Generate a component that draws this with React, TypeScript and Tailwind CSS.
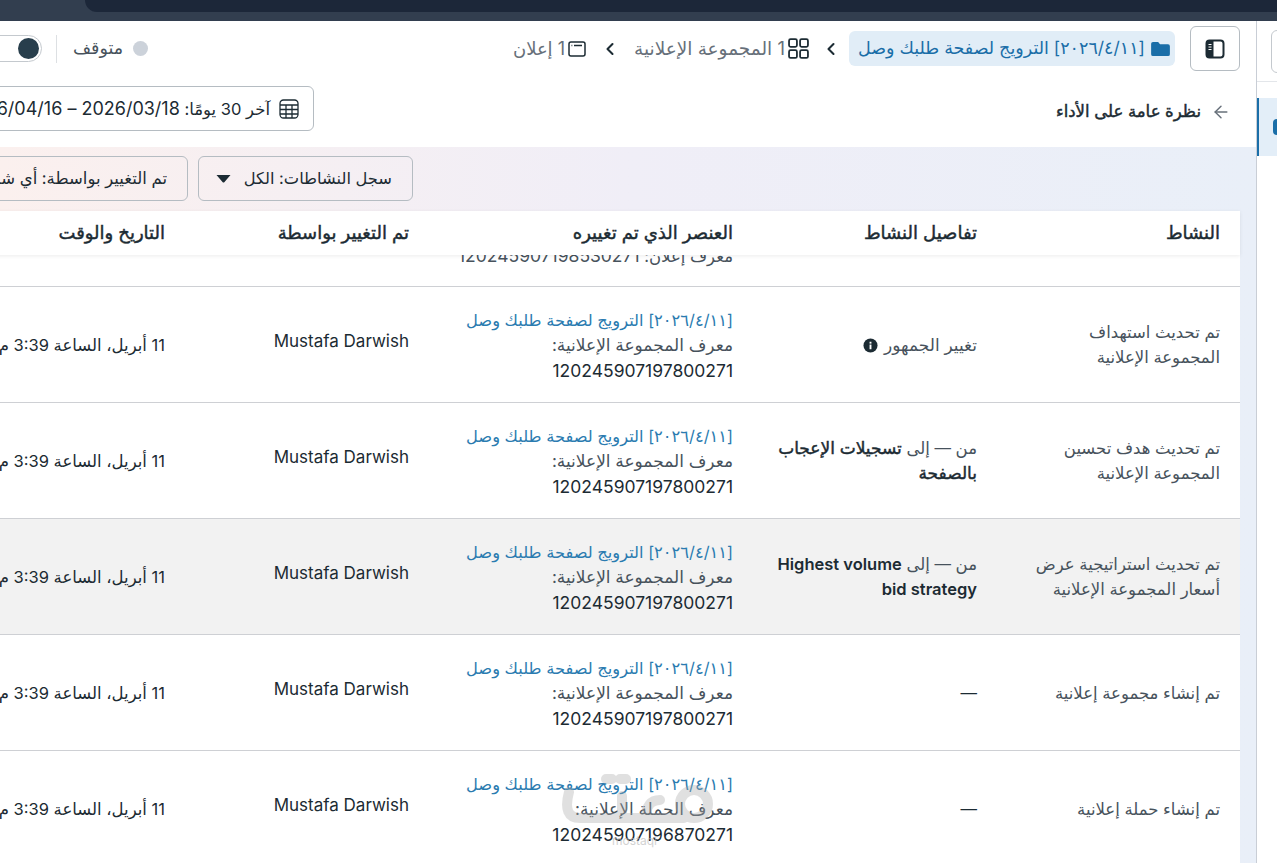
import React from 'react';
import { ArrowLeft, ChevronLeft } from 'lucide-react';

const FONT = "font-['Inter','DejaVu_Sans',sans-serif]";
const HEAVY = 'font-normal [-webkit-text-stroke:0.45px_#1c2b33]';

interface Row {
  activity: string[];
  details: React.ReactNode;
  detailsLift?: boolean;
  idLabel: string;
  id: string;
  hover?: boolean;
}

const CAMPAIGN = '[٢٠٢٦/٤/١١] الترويج لصفحة طلبك وصل';

const rows: Row[] = [
  {
    activity: ['تم تحديث استهداف', 'المجموعة الإعلانية'],
    details: (
      <span className="flex items-center justify-start gap-[6px] text-[17px] text-[#47525c]">
        تغيير الجمهور
        <svg viewBox="0 0 16 16" className="h-[15px] w-[15px] fill-[#1c2b33]">
          <circle cx="8" cy="8" r="7.5" />
          <rect x="7" y="7" width="2" height="5" fill="#fff" />
          <rect x="7" y="4" width="2" height="2" fill="#fff" />
        </svg>
      </span>
    ),
    idLabel: 'معرف المجموعة الإعلانية:',
    id: '120245907197800271',
  },
  {
    activity: ['تم تحديث هدف تحسين', 'المجموعة الإعلانية'],
    details: (
      <>
        <span className="text-[#47525c]">من — إلى </span>
        <b className={`text-[17px] ${HEAVY}`}>تسجيلات الإعجاب بالصفحة</b>
      </>
    ),
    detailsLift: true,
    idLabel: 'معرف المجموعة الإعلانية:',
    id: '120245907197800271',
  },
  {
    activity: ['تم تحديث استراتيجية عرض', 'أسعار المجموعة الإعلانية'],
    details: (
      <>
        <span className="text-[#47525c]">من — إلى </span>
        <b className="font-semibold">Highest volume bid strategy</b>
      </>
    ),
    detailsLift: true,
    idLabel: 'معرف المجموعة الإعلانية:',
    id: '120245907197800271',
    hover: true,
  },
  {
    activity: ['تم إنشاء مجموعة إعلانية'],
    details: '—',
    idLabel: 'معرف المجموعة الإعلانية:',
    id: '120245907197800271',
  },
  {
    activity: ['تم إنشاء حملة إعلانية'],
    details: '—',
    idLabel: 'معرف الحملة الإعلانية:',
    id: '120245907196870271',
  },
];

const COLS = 'grid grid-cols-[243px_244px_324px_244px_244px]';

const App = () => {
  return (
    <div dir="rtl" className={`${FONT} relative flex h-[863px] w-[1277px] flex-col overflow-hidden bg-white text-[16.5px] text-[#1c2b33]`}>
      {/* browser chrome */}
      <div dir="ltr" className="h-[21px] shrink-0 bg-[#323e4f]">
        <div className="ml-[85px] h-3 rounded-bl-[14px] bg-[#1c2739]" />
      </div>

      <div className="flex min-h-0 flex-1">
        {/* right rail */}
        <aside className="w-[21px] shrink-0 overflow-hidden border-l border-[#c9ced6] bg-white">
          <div className="h-[61px] border-b border-[#e3e6ea] pt-[9px]">
            <div className="-mr-[4px] ml-[14px] h-[43px] rounded-l-md border border-[#c4c9ce]" />
          </div>
          <div className="mt-[16px] flex h-[58px] items-center border-l-2 border-[#1a6ea8] bg-[#e3eef8]">
            <div className="-mr-[4px] h-4 w-2 shrink-0 rounded-sm bg-[#1a6ea8]" />
          </div>
        </aside>

        <main className="flex min-w-0 flex-1 flex-col">
          {/* breadcrumb bar */}
          <div className="flex h-[55px] shrink-0 items-center pr-[16px]">
            <button className="flex h-[45px] w-[50px] shrink-0 items-center justify-center rounded-md border border-[#b5bcc2]">
              <svg viewBox="0 0 20 20" className="h-5 w-5">
                <rect x="1.5" y="1.5" width="17" height="17" rx="3" fill="#fff" stroke="#1c2b33" strokeWidth="2" />
                <path d="M4 1.5h4.5v17H4a2.5 2.5 0 0 1-2.5-2.5V4A2.5 2.5 0 0 1 4 1.5z" fill="#1c2b33" />
                <path d="M3.500 5.500h3M3.500 8h3M3.500 10.500h3" stroke="#fff" strokeWidth="1" />
              </svg>
            </button>
            <div className="mr-[15px] flex h-[35px] items-center gap-[6px] rounded-md bg-[#e1edf7] pr-[5px] pl-[9px] text-[17.5px] text-[#1a6ea8]">
              <svg viewBox="0 0 20 16" className="h-[15px] w-[19px] shrink-0 fill-[#1a6ea8]">
                <path d="M2 1h5.500l2 2.500H18a2 2 0 0 1 2 2V14a2 2 0 0 1-2 2H2a2 2 0 0 1-2-2V3a2 2 0 0 1 2-2z" />
              </svg>
              <span className="whitespace-nowrap">{CAMPAIGN}</span>
            </div>
            <ChevronLeft className="mr-[8px] h-5 w-5 shrink-0 text-[#1c2b33]" strokeWidth={2.5} />
            <div className="mr-[12px] flex items-center gap-[3px] text-[18.5px] text-[#67707a]">
              <svg viewBox="0 0 20 20" className="h-[21px] w-[21px] shrink-0 fill-none stroke-[#1c2b33]" strokeWidth="1.700">
                <rect x="1" y="1" width="7.500" height="7.500" rx="1.500" />
                <rect x="11.500" y="1" width="7.500" height="7.500" rx="1.500" />
                <rect x="1" y="11.500" width="7.500" height="7.500" rx="1.500" />
                <rect x="11.500" y="11.500" width="7.500" height="7.500" rx="1.500" />
              </svg>
              <span className="whitespace-nowrap">1 المجموعة الإعلانية</span>
            </div>
            <ChevronLeft className="mr-[14px] h-5 w-5 shrink-0 text-[#1c2b33]" strokeWidth={2.5} />
            <div className="mr-[14px] flex items-center gap-[3px] text-[18px] text-[#67707a]">
              <svg viewBox="0 0 18 16" className="h-[16px] w-[18px] shrink-0 fill-none stroke-[#1c2b33]" strokeWidth="1.500">
                <rect x="1" y="1" width="16" height="14" rx="2" />
                <path d="M3.500 4.500h.8M6 4.500h8" />
              </svg>
              <span className="whitespace-nowrap">1 إعلان</span>
            </div>
            <div className="mr-auto flex items-center">
              <span className="h-[15px] w-[15px] shrink-0 rounded-full bg-[#ccd2da]" />
              <span className="mr-[10px] text-[17.5px] text-[#47525c]">متوقف</span>
              <span className="mr-[16px] h-[28px] w-px bg-[#dde0e3]" />
              <div className="mr-[14px] -ml-[14px] flex h-[27px] w-[56px] shrink-0 items-center rounded-full border border-[#c4c9ce] px-[2px]">
                <span className="h-[21px] w-[21px] rounded-full bg-[#283e4c]" />
              </div>
            </div>
          </div>

          {/* overview row */}
          <div className="flex h-[71px] shrink-0 items-center pr-[25px]">
            <ArrowLeft className="h-5 w-5 shrink-0 text-[#67707a]" strokeWidth={1.75} />
            <span className={`mr-[10px] text-[16.5px] whitespace-nowrap ${HEAVY}`}>نظرة عامة على الأداء</span>
            <div className="mr-auto -mt-[6px] -ml-[70px] flex h-[45px] w-[384px] shrink-0 items-center gap-[9px] overflow-hidden rounded-md border border-[#b5bcc2] pr-[14px] whitespace-nowrap">
              <svg viewBox="0 0 20 20" className="h-5 w-5 shrink-0 fill-none stroke-[#1c2b33]" strokeWidth="1.300">
                <rect x="1" y="1" width="18" height="18" rx="3.500" />
                <path d="M1 6h18M1 10.500h18M1 15h18M7 6v13M13 6v13" />
              </svg>
              <span>
                آخر 30 يومًا: <span className="text-[18px]">2026/03/18 – 2026/04/16</span>
              </span>
            </div>
          </div>

          {/* table area */}
          <div className="flex min-h-0 flex-1 flex-col bg-gradient-to-l from-[#e9eff8] via-[#f0eef7] to-[#fbf0ee]">
            <div className="flex h-[64px] shrink-0 items-center gap-[10px] pr-[843px] pb-[1px]">
              <button className="flex h-[45px] w-[215px] shrink-0 items-center justify-between rounded-md border border-[#b5bcc2] pr-[20px] pl-[17px] text-[16.3px]">
                <span className="whitespace-nowrap">سجل النشاطات: الكل</span>
                <svg viewBox="0 0 14 8" className="h-2 w-[15px] fill-[#1c2b33]">
                  <path d="M0 0h14L8 7a1.300 1.300 0 0 1-2 0z" />
                </svg>
              </button>
              <button className="flex h-[45px] w-[240px] shrink-0 items-center rounded-md border border-[#b5bcc2] px-[20px]">
                <span className="whitespace-nowrap">تم التغيير بواسطة: أي شخص</span>
              </button>
            </div>

            <div className="mr-[16px] ml-[-84px] flex min-h-0 flex-1 flex-col bg-white">
              <div className={`${COLS} relative z-10 h-[44px] shrink-0 items-center bg-white pb-[1px] text-[18px] shadow-[0_1px_4px_rgba(0,0,0,0.08)]`}>
                {['النشاط', 'تفاصيل النشاط', 'العنصر الذي تم تغييره', 'تم التغيير بواسطة', 'التاريخ والوقت'].map((h) => (
                  <div key={h} className={`pr-[20px] whitespace-nowrap ${HEAVY}`}>{h}</div>
                ))}
              </div>
              <div className="min-h-0 flex-1 overflow-hidden">
                <div className={`${COLS} h-[31px]`}>
                  <div />
                  <div />
                  <div className="-mt-[12px] pr-[20px] leading-[25px] whitespace-nowrap text-[#47525c]">
                    معرف إعلان: <span className="text-[17.5px]">120245907198530271</span>
                  </div>
                </div>
                {rows.map((r, i) => (
                  <div key={i} className={`${COLS} h-[116px] items-center border-t border-[#ced0d4] pt-[2px] leading-[25px] ${r.hover ? 'bg-[#f2f2f2]' : ''}`}>
                    <div className={`pr-[20px] text-[#47525c] ${r.activity.length > 1 ? 'pb-[2px]' : ''}`}>
                      {r.activity.map((l) => (
                        <div key={l} className="whitespace-nowrap">{l}</div>
                      ))}
                    </div>
                    <div className={`pr-[20px] pl-[10px] ${r.detailsLift ? 'pb-[2px]' : ''}`}>{r.details}</div>
                    <div className="pr-[20px]">
                      <div className="text-[16.3px] whitespace-nowrap text-[#2a7bb0]">{CAMPAIGN}</div>
                      <div className="text-[17px] text-[#47525c]">{r.idLabel}</div>
                      <div className="text-[17.5px]">{r.id}</div>
                    </div>
                    <div className="pr-[20px] pb-[8px] text-[17px]">Mustafa Darwish</div>
                    <div className="pr-[20px] whitespace-nowrap">11 أبريل، الساعة 3:39 م</div>
                  </div>
                ))}
              </div>
            </div>
          </div>
        </main>
      </div>

      {/* watermark logo */}
      <svg viewBox="0 0 154 80" className="pointer-events-none absolute top-[770px] left-[562px] h-[80px] w-[154px] fill-none stroke-[#a9a9a9] opacity-35" strokeWidth="10" strokeLinecap="round">
        <path d="M7 22Q0 48 18 48H122" />
        <circle cx="132" cy="34" r="14" />
        <path d="M60 48V26M84 48Q84 30 98 30" />
        <path d="M44 9h6M58 9h6" />
      </svg>
      <span className="pointer-events-none absolute top-[833px] left-[612px] text-[12px] leading-4 text-[#b5b5b5] opacity-60">mostaql</span>
    </div>
  );
};

export default App;
